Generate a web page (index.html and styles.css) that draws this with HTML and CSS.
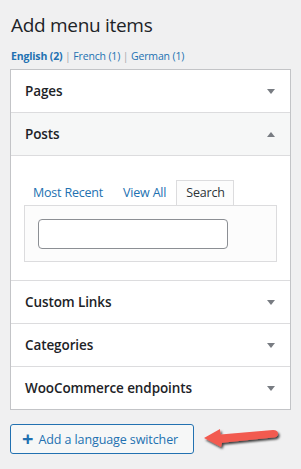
FILE: index.html
```html
<!DOCTYPE html>
<html lang="en">
<head>
  <meta charset="UTF-8" />
  <meta name="viewport" content="width=device-width, initial-scale=1.0"/>
  <title>Add menu items</title>
  <link rel="stylesheet" href="styles.css">
</head>
<body>

  <div class="wrap">
    <h2 class="title">Add menu items</h2>

    <div class="langs">
      <a href="#" class="current">English (2)</a>
      <span class="sep">|</span>
      <a href="#">French (1)</a>
      <span class="sep">|</span>
      <a href="#">German (1)</a>
    </div>

    <div class="accordion">
      <div class="section">
        <span>Pages</span>
        <span class="toggle down"></span>
      </div>

      <div class="section open">
        <span>Posts</span>
        <span class="toggle up"></span>
      </div>
      <div class="section-body">
        <ul class="tabs">
          <li><a href="#">Most Recent</a></li>
          <li><a href="#">View All</a></li>
          <li class="active">Search</li>
        </ul>
        <div class="tab-panel">
          <input type="search" class="search-input">
        </div>
      </div>

      <div class="section">
        <span>Custom Links</span>
        <span class="toggle down"></span>
      </div>
      <div class="section">
        <span>Categories</span>
        <span class="toggle down"></span>
      </div>
      <div class="section">
        <span>WooCommerce endpoints</span>
        <span class="toggle down"></span>
      </div>
    </div>

    <div class="actions">
      <button class="switcher-btn"><span class="plus">+</span> Add a language switcher</button>
      <svg class="pointer" width="80" height="28" viewBox="0 0 80 28">
        <defs>
          <filter id="shadow" x="-10%" y="-30%" width="130%" height="170%">
            <feDropShadow dx="1.5" dy="2" stdDeviation="1" flood-color="#000" flood-opacity="0.75"/>
          </filter>
        </defs>
        <path d="M2 13 L18 4 L18.5 9.5 L71 5 Q76 5 76 8.5 Q76 12.5 71 12.5 L20 17.7 L19 22 Z"
              fill="#f25a50" filter="url(#shadow)"/>
      </svg>
    </div>
  </div>

</body>
</html>
```

FILE: styles.css
```css
body {
  margin: 0;
  background: #f0f0f1;
  font-family: "Open Sans", "Noto Sans", sans-serif;
  color: #1d2327;
}

.wrap {
  padding: 0 10px;
}

.title {
  margin: 0;
  padding: 12px 0 0 1px;
  font-size: 19px;
  font-weight: 400;
  line-height: 26px;
  letter-spacing: -0.3px;
}

.langs {
  margin-top: 11px;
  padding-left: 1px;
  font-size: 10.5px;
  line-height: 14px;
  height: 17px;
  letter-spacing: -0.15px;
}

.langs a {
  color: #2271b1;
  text-decoration: none;
}

.langs a.current {
  font-weight: 700;
}

.langs .sep {
  color: #a7aaad;
}

.accordion {
  margin-top: 3px;
  background: #fff;
  border: 1px solid #c3c4c7;
}

.section {
  display: flex;
  align-items: center;
  justify-content: space-between;
  height: 42px;
  padding: 0 14px;
  border-bottom: 1px solid #dcdcde;
  font-size: 13.5px;
  font-weight: 600;
  letter-spacing: -0.1px;
}

.section:last-child {
  border-bottom: none;
}

.section.open {
  background: #f6f7f7;
}

.toggle {
  width: 0;
  height: 0;
  border-left: 4px solid transparent;
  border-right: 4px solid transparent;
  margin-right: 1px;
}

.toggle.down {
  border-top: 5px solid #787c82;
}

.toggle.up {
  border-bottom: 5px solid #787c82;
}

.section-body {
  padding: 24px 13px 18px;
  border-bottom: 1px solid #dcdcde;
}

.tabs {
  display: flex;
  list-style: none;
  margin: 0;
  padding: 0;
  font-size: 12.5px;
  letter-spacing: -0.2px;
}

.tabs li {
  height: 24px;
  line-height: 23px;
  padding: 0 9px;
  border: 1px solid transparent;
  border-bottom: none;
}

.tabs li:first-child {
  padding-left: 8px;
}

.tabs li a {
  color: #2271b1;
  text-decoration: none;
}

.tabs li.active {
  background: #fcfcfc;
  border-color: #dcdcde;
  margin-bottom: -1px;
  padding: 0 8px 0 9px;
  position: relative;
  color: #2c3338;
}

.tab-panel {
  background: #fcfcfc;
  border: 1px solid #dcdcde;
  padding: 13px 13px 12px;
}

.search-input {
  display: block;
  box-sizing: border-box;
  width: 190px;
  height: 30px;
  margin: 0;
  border: 1px solid #8c8f94;
  border-radius: 4px;
  background: #fff;
}

.actions {
  display: flex;
  align-items: center;
  margin-top: 14px;
}

.switcher-btn {
  box-sizing: border-box;
  height: 30px;
  width: 184px;
  padding: 0 0 0 11px;
  background: #f6f7f7;
  border: 1px solid #2271b1;
  border-radius: 3px;
  color: #2271b1;
  font-family: inherit;
  font-size: 12.5px;
  letter-spacing: -0.1px;
  white-space: nowrap;
  text-align: left;
}

.plus {
  font-size: 20px;
  font-weight: 700;
  line-height: 1;
  vertical-align: -2px;
  margin-right: 2px;
}

.pointer {
  margin-left: 8px;
  margin-top: -1px;
}
```
